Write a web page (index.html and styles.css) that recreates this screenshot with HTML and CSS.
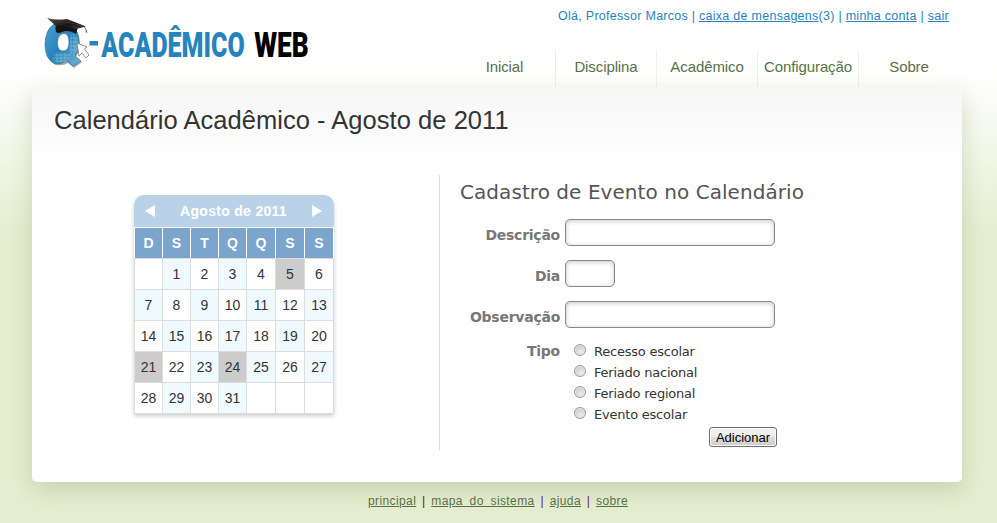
FILE: index.html
```html
<!DOCTYPE html>
<html lang="pt-BR">
<head>
<meta charset="utf-8">
<title>Q-Acadêmico Web</title>
<link rel="stylesheet" href="styles.css">
</head>
<body>
<header class="header">
  <svg class="logo" width="280" height="56" viewBox="0 0 280 56" role="img" aria-label="Q-Acadêmico Web">
    <defs>
      <linearGradient id="q" x1="0" y1="0" x2="1" y2="1"><stop offset="0" stop-color="#48a0d2"/><stop offset=".5" stop-color="#2783bd"/><stop offset="1" stop-color="#77b6d5"/></linearGradient>
      <linearGradient id="cap" x1="0" y1="0" x2="1" y2="1"><stop offset="0" stop-color="#55504e"/><stop offset=".6" stop-color="#191515"/><stop offset="1" stop-color="#4b4341"/></linearGradient>
    </defs>
    <path fill-rule="evenodd" d="M14 10H30Q39 16 39 29Q39 36 35 42L41 47L33 53L27 48Q23 51 15 50Q5 45 5 31Q5 16 14 10ZM23 19Q17 20 17 28Q17 37 23 37Q29 37 29 28Q29 19 23 19Z" fill="#555" opacity=".5" transform="translate(1 1)"/>
    <path fill-rule="evenodd" d="M14 10H30Q39 16 39 29Q39 36 35 42L41 47L33 52L27 47Q23 50 15 50Q5 45 5 31Q5 16 14 10ZM23 19Q17 20 17 28Q17 37 23 37Q29 37 29 28Q29 19 23 19Z" fill="url(#q)" stroke="#276b91" stroke-width=".6"/>
    <path d="M14 41H31M13 44H30M15 47H26M17 39V48M21 39V48M25 39V48M31 20V40M34 19V42M36 24V38M30 24H38M30 28H38M30 32H38M30 36H37" stroke="#b5d7e5" stroke-width=".6" opacity=".65"/>
    <path d="M16 10Q15 13 16 18Q18 20 22 18Q29 15 36 20L38 13Z" fill="#171313"/>
    <path d="M7 4Q15 6.500 27 5L46 12.500L36 15Q23 11 16 12Z" fill="url(#cap)"/>
    <path d="M27 8L44 12L46.500 17" fill="none" stroke="#4b3b36" stroke-width=".7"/>
    <path d="M46 16L45.500 18.500H47.500Z" fill="#665850"/>
    <path d="M37 29L47 33L44.500 35L49 41L46 44L42 39L39 42Z" fill="#fff" stroke="#777" stroke-width=".8"/>
    <rect x="49.500" y="27" width="8.500" height="4.500" fill="#2584bd"/>
    <g transform="scale(.7 1)">
      <text class="logo-text" x="87.500" y="43.200" textLength="205" lengthAdjust="spacingAndGlyphs" fill="#2584bd">ACADÊMICO</text>
      <text class="logo-text" x="306" y="43.200" textLength="78" lengthAdjust="spacingAndGlyphs" fill="#000">WEB</text>
    </g>
  </svg>
  <div class="header-side">
    <div class="account">Olá, Professor Marcos | <a href="#">caixa de mensagens</a>(3) | <a href="#">minha conta</a> | <a href="#">sair</a></div>
    <nav class="menu"><a href="#">Inicial</a><a href="#">Disciplina</a><a href="#">Acadêmico</a><a href="#">Configuração</a><a href="#">Sobre</a></nav>
  </div>
</header>
<main class="panel">
  <h1>Calendário Acadêmico - Agosto de 2011</h1>
  <div class="content">
    <section class="calendar">
      <div class="calendar-head">
        <svg width="10" height="12"><path d="M10 0V12L0 6Z" fill="#fff"/></svg>
        <span>Agosto de 2011</span>
        <svg width="10" height="12"><path d="M0 0V12L10 6Z" fill="#fff"/></svg>
      </div>
      <div class="weekdays"><b>D</b><b>S</b><b>T</b><b>Q</b><b>Q</b><b>S</b><b>S</b></div>
      <div class="days">
        <span></span><span class="alt">1</span><span>2</span><span class="alt">3</span><span>4</span><span class="marked">5</span><span>6</span>
        <span class="alt">7</span><span>8</span><span class="alt">9</span><span>10</span><span class="alt">11</span><span>12</span><span class="alt">13</span>
        <span>14</span><span class="alt">15</span><span>16</span><span class="alt">17</span><span>18</span><span class="alt">19</span><span>20</span>
        <span class="marked">21</span><span>22</span><span class="alt">23</span><span class="marked">24</span><span class="alt">25</span><span>26</span><span class="alt">27</span>
        <span>28</span><span class="alt">29</span><span>30</span><span class="alt">31</span><span></span><span></span><span></span>
      </div>
    </section>
    <form class="event-form">
      <h2>Cadastro de Evento no Calendário</h2>
      <div class="field"><label for="desc">Descrição</label><input id="desc" type="text"></div>
      <div class="field"><label for="dia">Dia</label><input id="dia" class="short" type="text"></div>
      <div class="field"><label for="obs">Observação</label><input id="obs" type="text"></div>
      <div class="types">
        <span class="types-label">Tipo</span>
        <div class="options">
          <label><input type="radio" name="tipo">Recesso escolar</label>
          <label><input type="radio" name="tipo">Feriado nacional</label>
          <label><input type="radio" name="tipo">Feriado regional</label>
          <label><input type="radio" name="tipo">Evento escolar</label>
        </div>
      </div>
      <button type="button">Adicionar</button>
    </form>
  </div>
</main>
<footer class="footer"><a href="#">principal</a><i>|</i><a href="#">mapa do sistema</a><i>|</i><a href="#">ajuda</a><i>|</i><a href="#">sobre</a></footer>
</body>
</html>
```
FILE: styles.css
```css
* { box-sizing: border-box; }
body {
  margin: 0;
  height: 523px;
  overflow: hidden;
  font-family: "Liberation Sans", Arial, sans-serif;
  color: #333;
  background: linear-gradient(#fff 0, #fff 70px, #e5eed0 230px, #e5eed0 100%);
}
.header { display: flex; justify-content: space-between; height: 87px; padding: 0 38px 0 40px; }
.logo { margin-top: 14px; }
.logo-text { font: 900 36px Roboto, sans-serif; }
.header-side { display: flex; flex-direction: column; align-items: flex-end; }
.account { height: 50px; padding: 8px 10px 0 0; font-size: 12.5px; line-height: 16px; letter-spacing: .27px; color: #2584bd; white-space: nowrap; }
.account a { color: inherit; }
.menu { display: flex; height: 37px; }
.menu a { width: 101px; border-left: 1px solid #eee; text-align: center; font-size: 15px; line-height: 34px; letter-spacing: -.1px; color: #587048; text-decoration: none; }
.menu a:first-child { border-left: 0; }
.panel {
  position: relative;
  width: 930px;
  height: 395px;
  margin-left: 32px;
  border-radius: 5px;
  background: linear-gradient(#f6f6f6, #fff 80px);
  box-shadow: 0 8px 22px rgba(110, 120, 70, .24);
}
h1 { margin: 0; height: 88px; padding: 16px 22px 0; font-size: 25.5px; font-weight: 400; line-height: 34px; letter-spacing: .04px; }
.content { display: flex; }
.calendar { width: 200px; height: 219px; margin: 20px 105px 0 102px; border-radius: 10px 10px 0 0; box-shadow: 0 2px 4px rgba(0, 0, 0, .2); background: #fff; }
.calendar-head { display: flex; justify-content: space-between; align-items: center; height: 32px; padding: 0 12px 0 11px; border-radius: 10px 10px 0 0; background: #bad2e7; color: #fff; font-weight: 700; font-size: 14px; letter-spacing: .3px; }
.weekdays, .days { display: grid; grid-template-columns: 28px 28px 28px 28px 29px 29px 29px; text-align: center; }
.weekdays { height: 31px; padding: 1px 0 0 1px; }
.weekdays b { margin-right: 1px; background: #7ba5cc; color: #fff; font-size: 14px; line-height: 30px; }
.days { border-top: 1px solid #ddd; border-left: 1px solid #ddd; }
.days span { height: 31px; border-right: 1px solid #ddd; border-bottom: 1px solid #ddd; font-size: 14px; line-height: 31px; }
.days .alt { background: #eefaff; }
.days .marked { background: #ccc; }
.event-form { width: 370px; height: 275px; padding-left: 20px; border-left: 1px solid #ddd; font-family: "DejaVu Sans", Verdana, sans-serif; }
h2 { margin: 0; height: 44px; padding-top: 1px; font-size: 20px; line-height: 32px; font-weight: 400; letter-spacing: .06px; color: #555; white-space: nowrap; }
.field { display: flex; height: 41px; }
.field label, .types-label { width: 100px; margin-right: 5px; text-align: right; font-weight: 700; font-size: 14px; letter-spacing: -.25px; color: #777; }
.field label { line-height: 32px; }
.field input { width: 210px; height: 27px; padding: 0 4px; border: 1px solid #888; border-radius: 5px; background: #fff; box-shadow: inset 0 1px 5px rgba(0, 0, 0, .23); }
.field .short { width: 50px; }
.types { display: flex; height: 85px; }
.types-label { line-height: 18px; }
.options { padding-left: 9px; }
.options label { display: flex; height: 21px; font-size: 13px; line-height: 20px; letter-spacing: -.22px; white-space: nowrap; }
.options input { appearance: none; width: 12px; height: 12px; margin: 2px 8px 0 0; border: 1px solid #999; border-radius: 50%; background: radial-gradient(circle at 60% 65%, #eee, #c9ccd1 65%); box-shadow: inset 0 0 0 1px #eee; }
button { display: block; width: 68px; height: 20px; margin-left: 249px; padding: 0; border: 1px solid #707070; border-radius: 3px; background: linear-gradient(#f3f3f3 0, #ebebeb 50%, #ddd 50%, #cfcfcf 100%); box-shadow: inset 0 0 0 1px #fafafa; color: #000; font: 13px/20px "Liberation Sans", Arial, sans-serif; white-space: nowrap; }
.footer { position: relative; display: flex; justify-content: center; padding: 11px 1px 0 0; font-size: 12px; line-height: 16px; letter-spacing: .4px; word-spacing: 3px; color: #587048; }
.footer a { color: inherit; }
.footer i { width: 15px; text-align: center; font-style: normal; color: #612563; }
.footer i:first-of-type { color: #333; }
```
